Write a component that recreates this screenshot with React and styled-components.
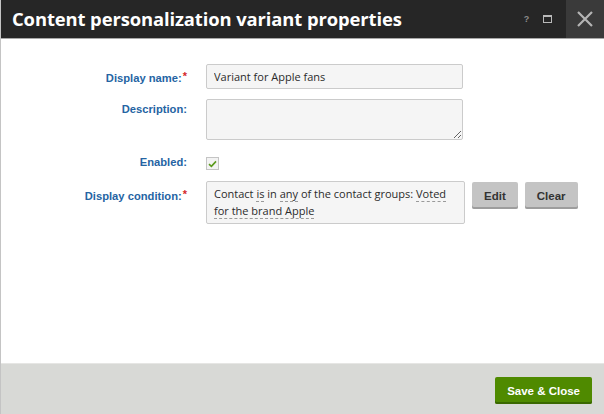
import styled, { createGlobalStyle } from 'styled-components'

const GlobalStyle = createGlobalStyle`
	html, body {
		margin: 0;
		padding: 0;
		height: 100%;
		background: #ffffff;
	}
	#root {
		height: 100%;
	}
	* {
		box-sizing: border-box;
	}
`

const Dialog = styled.div`
	display: flex;
	flex-direction: column;
	width: 604px;
	height: 414px;
	border-left: 1px solid #c4c4c4;
	font-family: "Open Sans", "Noto Sans", sans-serif;
	overflow: hidden;
`

const Header = styled.header`
	display: flex;
	align-items: stretch;
	height: 39px;
	flex: 0 0 auto;
	background: #262626;
	border-bottom: 1px solid #a8a8a8;
`

const Title = styled.h1`
	flex: 1 1 auto;
	margin: 0;
	padding: 0 0 2px 11px;
	display: flex;
	align-items: center;
	color: #ffffff;
	font-size: 18.4px;
	font-weight: 700;
	letter-spacing: -0.1px;
`

const HeaderTool = styled.button`
	display: flex;
	align-items: center;
	justify-content: center;
	width: ${p => p.$wide ? '38px' : '21px'};
	padding: 0;
	border: 0;
	background: ${p => p.$wide ? '#3a3a3a' : 'transparent'};
	color: #8c8c8c;
	font-family: "Liberation Sans", sans-serif;
	font-size: 9px;
	font-weight: 700;
	margin-left: ${p => p.$wide ? '8px' : '0'};
`

const MaxBox = styled.span`
	display: block;
	width: 9px;
	height: 8px;
	border: 1.5px solid #b9b9b9;
	border-top-width: 2px;
`

const Body = styled.main`
	flex: 1 1 auto;
	background: #ffffff;
	padding-top: 25px;
`

const Form = styled.div`
	display: grid;
	grid-template-columns: 186px 257px auto;
	column-gap: 19px;
	row-gap: 10px;
	align-items: start;
`

const Label = styled.label`
	grid-column: 1;
	justify-self: end;
	padding-top: ${p => p.$top || '6px'};
	color: #2564a3;
	font-family: "Liberation Sans", Arial, sans-serif;
	font-size: 11.2px;
	font-weight: 700;
	white-space: nowrap;

	em {
		color: #d42a2a;
		font-style: normal;
		font-size: 11px;
		vertical-align: 2px;
		margin-left: 1px;
	}
`

const Field = styled.div`
	grid-column: ${p => p.$span ? '2 / 4' : '2 / 3'};
	display: flex;
	gap: 7px;
	align-items: flex-start;
`

const TextInput = styled.input`
	width: 257px;
	height: 25px;
	padding: 0 7px;
	border: 1.5px solid #cbcbcb;
	border-radius: 2px;
	background: #f5f5f5;
	color: #2b2b2b;
	font-family: "Open Sans", sans-serif;
	font-size: 11px;
	outline: none;
`

const TextArea = styled.textarea`
	display: block;
	width: 257px;
	height: 41px;
	border: 1.5px solid #cbcbcb;
	border-radius: 2px;
	background: #f5f5f5;
	resize: both;
	outline: none;
`

const Check = styled.span`
	display: flex;
	align-items: center;
	justify-content: center;
	width: 13px;
	height: 13px;
	margin: 7px 0 1px;
	border: 1.5px solid #c4c4c4;
	background: #f3f3f3;
`

const ConditionBox = styled.div`
	flex: 0 0 259px;
	min-height: 42px;
	padding: 3px 7px 4px;
	border: 1.5px solid #cbcbcb;
	border-radius: 2px;
	background: #f5f5f5;
	color: #2b2b2b;
	font-size: 11px;
	line-height: 17px;
`

const Term = styled.span`
	border-bottom: 1px dashed #9a9a9a;
`

const GrayButton = styled.button`
	height: 27px;
	padding: 0 ${p => p.$pad || '13px'};
	margin-top: 1px;
	border: 0;
	border-radius: 2px;
	background: #c4c4c4;
	box-shadow: inset 0 -2px 0 #9d9d9d;
	color: #333333;
	font-family: "Liberation Sans", Arial, sans-serif;
	font-size: 11.5px;
	font-weight: 700;
`

const Footer = styled.footer`
	flex: 0 0 51px;
	display: flex;
	justify-content: flex-end;
	align-items: flex-start;
	padding: 13px 12px 0 0;
	background: #d8d9d6;
	border-top: 1px solid #e6e6e4;
`

const PrimaryButton = styled.button`
	height: 27px;
	padding: 0 12px;
	border: 0;
	border-radius: 2px;
	background: #4f8a00;
	box-shadow: inset 0 -2px 0 #3a6800;
	color: #ffffff;
	font-family: "Liberation Sans", Arial, sans-serif;
	font-size: 11.5px;
	font-weight: 700;
`

export default function App() {
	return (
		<Dialog>
			<GlobalStyle />
			<Header>
				<Title>Content personalization variant properties</Title>
				<HeaderTool aria-label="Help">?</HeaderTool>
				<HeaderTool aria-label="Maximize"><MaxBox /></HeaderTool>
				<HeaderTool $wide aria-label="Close">
					<svg width="18" height="18" viewBox="0 0 18 18">
						<path d="M2 2 L16 16 M16 2 L2 16" stroke="#b4b4b4" strokeWidth="2.2" fill="none" />
					</svg>
				</HeaderTool>
			</Header>
			<Body>
				<Form>
					<Label>Display name:<em>*</em></Label>
					<Field>
						<TextInput defaultValue="Variant for Apple fans" />
					</Field>

					<Label $top="4px">Description:</Label>
					<Field>
						<TextArea />
					</Field>

					<Label $top="6px">Enabled:</Label>
					<Field>
						<Check>
							<svg width="9" height="8" viewBox="0 0 9 8">
								<path d="M1 4.2 L3.4 6.4 L8 1.4" stroke="#5b9a1c" strokeWidth="1.6" fill="none" />
							</svg>
						</Check>
					</Field>

					<Label $top="7px">Display condition:<em>*</em></Label>
					<Field $span>
						<ConditionBox>
							Contact <Term>is</Term> in <Term>any</Term> of the contact groups: <Term>Voted</Term>{' '}
							<Term>for the brand Apple</Term>
						</ConditionBox>
						<GrayButton $pad="12px">Edit</GrayButton>
						<GrayButton $pad="12px">Clear</GrayButton>
					</Field>
				</Form>
			</Body>
			<Footer>
				<PrimaryButton>Save &amp; Close</PrimaryButton>
			</Footer>
		</Dialog>
	)
}
